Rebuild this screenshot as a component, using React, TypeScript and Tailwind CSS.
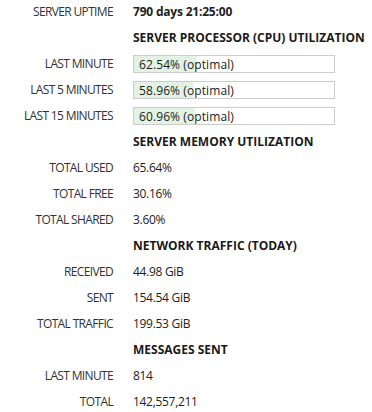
const cpu = [
  { label: 'LAST MINUTE', value: 62.54 },
  { label: 'LAST 5 MINUTES', value: 58.96 },
  { label: 'LAST 15 MINUTES', value: 60.96 },
]

type Row = { label?: string; value?: string; header?: string; bar?: number; bold?: boolean }

const rows: Row[] = [
  { label: 'SERVER UPTIME', value: '790 days 21:25:00', bold: true },
  { header: 'SERVER PROCESSOR (CPU) UTILIZATION' },
  ...cpu.map(c => ({ label: c.label, bar: c.value })),
  { header: 'SERVER MEMORY UTILIZATION' },
  { label: 'TOTAL USED', value: '65.64%' },
  { label: 'TOTAL FREE', value: '30.16%' },
  { label: 'TOTAL SHARED', value: '3.60%' },
  { header: 'NETWORK TRAFFIC (TODAY)' },
  { label: 'RECEIVED', value: '44.98 GiB' },
  { label: 'SENT', value: '154.54 GiB' },
  { label: 'TOTAL TRAFFIC', value: '199.53 GiB' },
  { header: 'MESSAGES SENT' },
  { label: 'LAST MINUTE', value: '814' },
  { label: 'TOTAL', value: '142,557,211' },
]

export default function App() {
  return (
    <div className="w-[372px] h-[412px] bg-white overflow-hidden font-['Open_Sans',sans-serif] text-[12px] text-[#222]">
      <div className="grid grid-cols-[113px_1fr] gap-x-5 -mt-px">
        {rows.map((r, i) => (
          <div key={i} className="contents">
            <div className="h-[26px] flex items-center justify-end text-[#333] tracking-[-0.65px] whitespace-nowrap">
              {r.label}
            </div>
            <div className="h-[26px] flex items-center whitespace-nowrap">
              {r.header && <span className="font-bold text-[#1a1a1a]">{r.header}</span>}
              {r.value && (
                <span className={r.bold ? 'font-bold tracking-[-0.2px]' : 'tracking-[-0.3px]'}>{r.value}</span>
              )}
              {r.bar !== undefined && (
                <div className="relative w-[202px] h-[18px] border border-[#cccccc] bg-white">
                  <div className="absolute left-0 top-0 bottom-0 bg-[#e3f3e3]" style={{ width: `${r.bar}px` }} />
                  <span className="relative pl-[5px] leading-[16px] tracking-[0.1px]">
                    {r.bar.toFixed(2)}% (optimal)
                  </span>
                </div>
              )}
            </div>
          </div>
        ))}
      </div>
    </div>
  )
}
